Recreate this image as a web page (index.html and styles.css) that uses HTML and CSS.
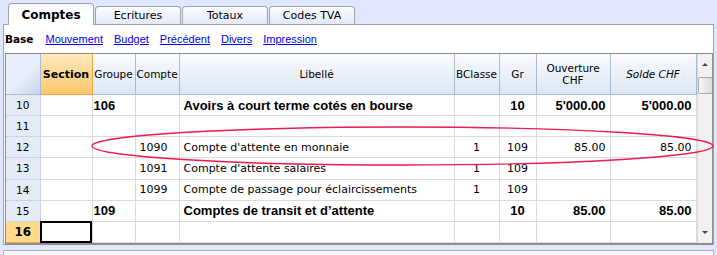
FILE: index.html
```html
<!DOCTYPE html>
<html>
<head>
    <title>Comptes</title>
    <link rel="stylesheet" href="styles.css">
</head>
<body>
    <div class="tabs">
        <div class="tab active">Comptes</div>
        <div class="tab">Ecritures</div>
        <div class="tab">Totaux</div>
        <div class="tab">Codes TVA</div>
    </div>

    <div class="panel">
        <div class="subnav">
            <b>Base</b>
            <a href="#">Mouvement</a>
            <a href="#">Budget</a>
            <a href="#">Précédent</a>
            <a href="#">Divers</a>
            <a href="#">Impression</a>
        </div>

        <div class="grid">
            <table class="sheet">
                <colgroup>
                    <col style="width:34px">
                    <col style="width:52px">
                    <col style="width:43px">
                    <col style="width:44px">
                    <col style="width:275px">
                    <col style="width:45px">
                    <col style="width:37px">
                    <col style="width:74px">
                    <col style="width:86px">
                </colgroup>
                <thead>
                    <tr>
                        <th class="corner"></th>
                        <th class="sel">Section</th>
                        <th>Groupe</th>
                        <th>Compte</th>
                        <th>Libellé</th>
                        <th>BClasse</th>
                        <th>Gr</th>
                        <th>Ouverture<br>CHF</th>
                        <th class="it">Solde CHF</th>
                    </tr>
                </thead>
                <tbody>
                    <tr class="total">
                        <td class="num">10</td><td></td><td class="grp">106</td><td></td>
                        <td class="txt">Avoirs à court terme cotés en bourse</td>
                        <td class="c"></td><td class="c">10</td><td class="r">5'000.00</td><td class="r">5'000.00</td>
                    </tr>
                    <tr>
                        <td class="num">11</td><td></td><td></td><td></td><td></td><td></td><td></td><td></td><td></td>
                    </tr>
                    <tr>
                        <td class="num">12</td><td></td><td></td><td class="acc">1090</td>
                        <td class="txt">Compte d'attente en monnaie</td>
                        <td class="c">1</td><td class="c">109</td><td class="r">85.00</td><td class="r">85.00</td>
                    </tr>
                    <tr>
                        <td class="num">13</td><td></td><td></td><td class="acc">1091</td>
                        <td class="txt">Compte d'attente salaires</td>
                        <td class="c">1</td><td class="c">109</td><td></td><td></td>
                    </tr>
                    <tr>
                        <td class="num">14</td><td></td><td></td><td class="acc">1099</td>
                        <td class="txt">Compte de passage pour éclaircissements</td>
                        <td class="c">1</td><td class="c">109</td><td></td><td></td>
                    </tr>
                    <tr class="total">
                        <td class="num">15</td><td></td><td class="grp">109</td><td></td>
                        <td class="txt">Comptes de transit et d’attente</td>
                        <td class="c"></td><td class="c">10</td><td class="r">85.00</td><td class="r">85.00</td>
                    </tr>
                    <tr>
                        <td class="num cur">16</td><td class="focus"></td><td></td><td></td><td></td><td></td><td></td><td></td><td></td>
                    </tr>
                </tbody>
            </table>
            <div class="scrollbar">
                <span class="arrow up"></span>
                <span class="thumb"></span>
                <span class="arrow down"></span>
            </div>
        </div>
    </div>
    <div class="next-panel"></div>

    <svg class="mark" width="717" height="255">
        <ellipse cx="402.5" cy="146" rx="310.5" ry="19" fill="none" stroke="#ea1d4c" stroke-width="1.4"/>
    </svg>
</body>
</html>
```

FILE: styles.css
```css
body {
    margin: 0;
    width: 717px;
    height: 255px;
    overflow: hidden;
    background-color: #dfe6fd;
    font-family: "DejaVu Sans", Tahoma, sans-serif;
    font-size: 11px;
    color: #000;
    position: relative;
}
.tabs {
    display: flex;
    align-items: flex-end;
    height: 24px;
    padding-left: 8px;
}
.tab {
    width: 84px;
    height: 17px;
    margin-right: 1px;
    border: 1px solid #a4a4a4;
    border-bottom: none;
    border-radius: 4px 4px 0 0;
    background: linear-gradient(#fbfcff, #e3e9fb);
    text-align: center;
    line-height: 18px;
    font-size: 11px;
}
.tab.active {
    height: 21px;
    margin-bottom: -1px;
    background: linear-gradient(#f4f7ff, #ffffff 40%);
    font-weight: bold;
    font-size: 12px;
    line-height: 22px;
    position: relative;
    z-index: 1;
}
.panel {
    margin: 0 3px 0 3px;
    border: 1px solid #a4a4a4;
    background-color: white;
    height: 219px;
}
.subnav {
    height: 28px;
    display: flex;
    align-items: center;
    gap: 11px;
    padding-left: 1px;
    font-family: "Liberation Sans", Tahoma, sans-serif;
    font-size: 11px;
}
.subnav b {
    font-family: "DejaVu Sans", Tahoma, sans-serif;
    font-size: 10.5px;
    margin-right: 1px;
}
.subnav a {
    color: #0000ee;
}
.grid {
    display: flex;
    margin-left: 1px;
    width: 706px;
    height: 189px;
    border: 1px solid #8e8e8e;
    border-bottom-width: 2px;
    overflow: hidden;
}
.sheet {
    border-collapse: collapse;
    table-layout: fixed;
    width: 690px;
}
.sheet th {
    height: 40px;
    padding: 0;
    font-weight: normal;
    font-size: 10.5px;
    background: linear-gradient(#f8fafd, #dde6f3);
    border-right: 1px solid #a6bcd6;
    border-bottom: 1px solid #a6bcd6;
    text-align: center;
    white-space: nowrap;
    overflow: hidden;
}
.sheet th.corner {
    background: linear-gradient(135deg, #e8eefb 55%, #c5d3ea);
}
.sheet th.sel {
    background: linear-gradient(#fde9bb, #f9c76f);
    border-right-color: #f0a440;
    border-bottom-color: #f0a440;
    font-weight: bold;
    font-size: 11px;
}
.sheet th.it {
    font-style: italic;
}
.sheet td {
    height: 20px;
    padding: 0 4px;
    border-right: 1px solid #dadada;
    border-bottom: 1px solid #dadada;
    white-space: nowrap;
    overflow: hidden;
    font-size: 11px;
}
.sheet td.num {
    background-color: #e4ebf6;
    border-right-color: #c7d4e6;
    border-bottom-color: #c7d4e6;
    text-align: center;
    font-size: 10.5px;
}
.sheet td.num.cur {
    background-color: #ffd98c;
    border-bottom: 1px solid #f0a440;
    font-weight: bold;
    font-size: 12px;
}
.sheet td.focus {
    outline: 2px solid #000;
    outline-offset: -2px;
}
.sheet td.grp {
    padding-left: 1px;
}
.sheet td.c {
    text-align: center;
}
.sheet td.r {
    text-align: right;
}
.total td {
    font-family: "Liberation Sans", Arial, sans-serif;
    font-weight: bold;
    font-size: 13px;
}
.total td.num {
    font-family: "DejaVu Sans", Tahoma, sans-serif;
    font-weight: normal;
    font-size: 10.5px;
}
.scrollbar {
    width: 17px;
    border-left: 1px solid #dadada;
    background-color: #f2f0f0;
    display: flex;
    flex-direction: column;
    align-items: center;
}
.arrow {
    width: 0;
    height: 0;
    border-left: 3px solid transparent;
    border-right: 3px solid transparent;
}
.arrow.up {
    margin-top: 9px;
    border-bottom: 3px solid #444;
}
.arrow.down {
    margin-top: auto;
    margin-bottom: 9px;
    border-top: 3px solid #444;
}
.thumb {
    margin-top: 11px;
    width: 13px;
    height: 15px;
    border: 1px solid #a8a8a8;
    border-radius: 2px;
    background: linear-gradient(90deg, #f6f6f6, #dcdcdc);
}
.next-panel {
    margin: 5px 3px 0 3px;
    height: 10px;
    border: 1px solid #b4b4b4;
    background-color: #f4f6fb;
}
.mark {
    position: absolute;
    left: 0;
    top: 0;
    pointer-events: none;
}
```
